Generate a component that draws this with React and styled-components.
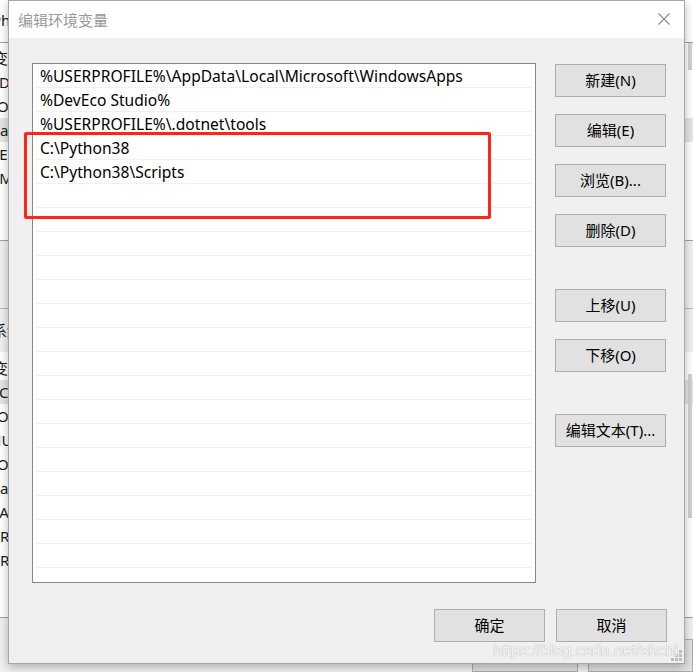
import React from "react";
import styled, { createGlobalStyle } from "styled-components";

const GlobalStyle = createGlobalStyle`
  html, body {
    margin: 0;
    padding: 0;
    background: #ffffff;
  }
`;

const UI_FONT = `"Noto Sans", "Noto Sans CJK SC", sans-serif`;

const Desktop = styled.div`
  position: relative;
  width: 693px;
  height: 672px;
  overflow: hidden;
  background: #f0f0f0;
  font-family: ${UI_FONT};
`;

/* ---------- the window behind the dialog ---------- */

const BackWindow = styled.div`
  position: absolute;
  inset: 0;
  display: flex;
  flex-direction: column;
  background: #f0f0f0;
`;

const BackTop = styled.div`
  height: 44px;
  background: #ffffff;
  border-bottom: 1px solid #a0a0a0;
  font-size: 15px;
  line-height: 40px;
  color: #1a1a1a;
`;

const BackList = styled.div`
  height: ${(p) => p.$height}px;
  background: #ffffff;
  padding-top: ${(p) => p.$pad}px;
  box-sizing: border-box;
  border-bottom: 1px solid #a0a0a0;
  display: flex;
  flex-direction: column;
  position: relative;
`;

const BackRow = styled.div`
  height: ${(p) => p.$h || 24}px;
  line-height: ${(p) => p.$h || 24}px;
  font-size: 15px;
  color: #1a1a1a;
  white-space: nowrap;
  text-indent: ${(p) => p.$shift || 0}px;
  background: ${(p) => (p.$selected ? "#e5e5e5" : "transparent")};
`;

const BackGap = styled.div`
  height: ${(p) => p.$h}px;
  border-bottom: 1px solid #b9b9b9;
`;

const BackScroll = styled.div`
  position: absolute;
  right: 1px;
  top: ${(p) => p.$top}px;
  width: 4px;
  height: ${(p) => p.$h}px;
  background: #d2d2d2;
`;

const BackButtons = styled.div`
  display: flex;
  gap: 10px;
  padding: 21px 0 0 472px;
`;

const BackButton = styled.div`
  width: 111px;
  height: 33px;
  box-sizing: border-box;
  border: 1px solid #adadad;
  background: #e1e1e1;
`;

/* ---------- the dialog ---------- */

const Dialog = styled.div`
  position: absolute;
  left: 8px;
  top: 0;
  width: 677px;
  height: 664px;
  box-sizing: border-box;
  border: 1px solid #a6a6a6;
  background: #f0f0f0;
  box-shadow: 0 3px 9px rgba(0, 0, 0, 0.28);
  display: flex;
  flex-direction: column;
`;

const TitleBar = styled.div`
  height: 37px;
  flex: none;
  background: #ffffff;
  display: flex;
  align-items: center;
  justify-content: space-between;
  padding: 0 14px 0 9px;
`;

const Title = styled.div`
  font-family: "Noto Sans CJK SC", sans-serif;
  font-size: 15px;
  color: #999999;
`;

const CloseIcon = styled.svg`
  width: 12px;
  height: 12px;
  display: block;
  margin-bottom: 1px;
`;

const Body = styled.div`
  display: flex;
  gap: 19px;
  padding: 25px 17px 0 23px;
`;

const ListBox = styled.div`
  width: 504px;
  height: 520px;
  flex: none;
  box-sizing: border-box;
  border: 1px solid #828790;
  background: #ffffff;
  overflow: hidden;
`;

const ListRow = styled.div`
  height: 24px;
  box-sizing: border-box;
  margin: 0 1px;
  border-bottom: 1px solid #f0f0f0;
  padding: 2px 0 0 6px;
  font-size: 15.6px;
  line-height: 21px;
  color: #000000;
  white-space: nowrap;
`;

const ButtonColumn = styled.div`
  display: flex;
  flex-direction: column;
  gap: 17px;
  padding-top: 1px;
`;

const Button = styled.button`
  width: 111px;
  height: 33px;
  box-sizing: border-box;
  border: 1px solid #adadad;
  background: #e1e1e1;
  color: #000000;
  font-family: ${UI_FONT};
  font-size: 15px;
  line-height: 1;
  padding: 0 0 1px;
  margin-top: ${(p) => (p.$groupStart ? 25 : 0)}px;
`;

const Footer = styled.div`
  display: flex;
  justify-content: flex-end;
  gap: 11px;
  padding: 26px 17px 0 0;
`;

const Grip = styled.svg`
  position: absolute;
  right: 2px;
  bottom: 2px;
  width: 11px;
  height: 11px;
`;

/* ---------- overlays ---------- */

const Highlight = styled.div`
  position: absolute;
  left: 24px;
  top: 132px;
  width: 467px;
  height: 87px;
  box-sizing: border-box;
  border: 3px solid #ff2519;
  border-radius: 2px;
`;

const Watermark = styled.div`
  position: absolute;
  left: 493px;
  top: 642px;
  font-family: "Liberation Sans", Arial, sans-serif;
  font-size: 16px;
  color: rgba(255, 255, 255, 0.92);
  text-shadow: 0 0 1px rgba(110, 110, 110, 0.7);
  white-space: nowrap;
`;

const paths = [
  "%USERPROFILE%\\AppData\\Local\\Microsoft\\WindowsApps",
  "%DevEco Studio%",
  "%USERPROFILE%\\.dotnet\\tools",
  "C:\\Python38",
  "C:\\Python38\\Scripts",
];

const rows = Array.from({ length: 22 }, (_, i) => paths[i] || "");

const userVars = [
  { text: "变量", shift: -7 },
  { text: "De", shift: -1 },
  { text: "Or", shift: -3 },
  { text: "Path", shift: -9, selected: true },
  { text: "TE", shift: -9 },
  { text: "TM", shift: -9 },
];

const sysVars = [
  { text: "变量", shift: -7 },
  { text: "Co", shift: -1, selected: true },
  { text: "Or", shift: -3 },
  { text: "NU", shift: -10 },
  { text: "OS", shift: -3 },
  { text: "Pa", shift: -9 },
  { text: "PA", shift: -9 },
  { text: "PR", shift: -9 },
  { text: "PR", shift: -9 },
];

export default function App() {
  return (
    <Desktop>
      <GlobalStyle />
      <BackWindow>
        <BackTop>
          <span style={{ marginLeft: -8 }}>Ph</span>
        </BackTop>
        <BackList $height={208} $pad={3}>
          {userVars.map((v, i) => (
            <BackRow key={i} $shift={v.shift} $selected={v.selected}>
              {v.text}
            </BackRow>
          ))}
          <BackScroll $top={0} $h={27} />
        </BackList>
        <BackGap $h={70} />
        <BackRow $h={43} $shift={-8}>
          系统
        </BackRow>
        <BackList $height={279} $pad={4}>
          {sysVars.map((v, i) => (
            <BackRow key={i} $shift={v.shift} $selected={v.selected}>
              {v.text}
            </BackRow>
          ))}
          <BackScroll $top={22} $h={144} />
        </BackList>
        <BackButtons>
          <BackButton />
          <BackButton />
        </BackButtons>
      </BackWindow>

      <Dialog>
        <TitleBar>
          <Title>编辑环境变量</Title>
          <CloseIcon viewBox="0 0 12 12">
            <path d="M0.5 0.5 L11.5 11.5 M11.5 0.5 L0.5 11.5" stroke="#8c8c8c" strokeWidth="1.1" fill="none" />
          </CloseIcon>
        </TitleBar>
        <Body>
          <ListBox>
            {rows.map((r, i) => (
              <ListRow key={i}>{r}</ListRow>
            ))}
          </ListBox>
          <ButtonColumn>
            <Button>新建(N)</Button>
            <Button>编辑(E)</Button>
            <Button>浏览(B)...</Button>
            <Button>删除(D)</Button>
            <Button $groupStart>上移(U)</Button>
            <Button>下移(O)</Button>
            <Button $groupStart>编辑文本(T)...</Button>
          </ButtonColumn>
        </Body>
        <Footer>
          <Button>确定</Button>
          <Button>取消</Button>
        </Footer>
        <Grip viewBox="0 0 11 11">
          {[
            [8, 0],
            [8, 4],
            [4, 4],
            [8, 8],
            [4, 8],
            [0, 8],
          ].map(([x, y], i) => (
            <rect key={i} x={x} y={y} width="3" height="3" fill="#bcbcbc" />
          ))}
        </Grip>
      </Dialog>

      <Highlight />
      <Watermark>https://blog.csdn.net/shchl</Watermark>
    </Desktop>
  );
}
